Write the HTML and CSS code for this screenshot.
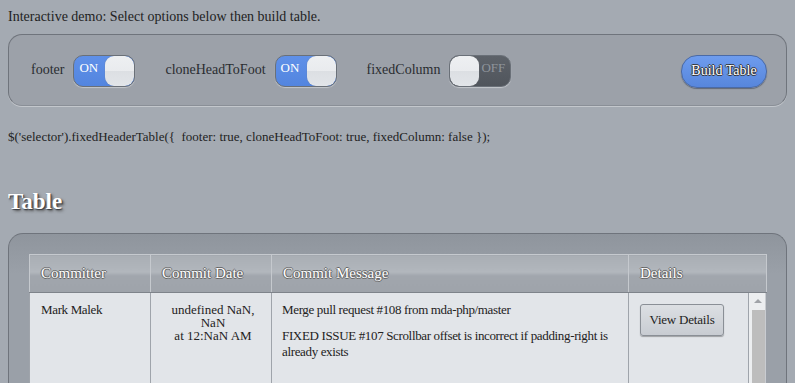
FILE: index.html
```html
<!DOCTYPE html>
<html lang="en">

<head>
  <meta charset="UTF-8">
  <meta name="viewport" content="width=device-width, initial-scale=1.0">
  <title>Fixed Header Table Demo</title>
  <link rel="stylesheet" href="styles.css">
</head>

<body>
  <p class="intro">Interactive demo: Select options below then build table.</p>

  <!-- option switches -->
  <div class="options">
    <div class="option">
      <span class="option-label">footer</span>
      <div class="toggle on"><span class="toggle-text">ON</span><span class="knob"></span></div>
    </div>
    <div class="option">
      <span class="option-label">cloneHeadToFoot</span>
      <div class="toggle on"><span class="toggle-text">ON</span><span class="knob"></span></div>
    </div>
    <div class="option">
      <span class="option-label">fixedColumn</span>
      <div class="toggle off"><span class="knob"></span><span class="toggle-text">OFF</span></div>
    </div>
    <button class="build-btn">Build Table</button>
  </div>

  <p class="code">$('selector').fixedHeaderTable({&nbsp; footer: true, cloneHeadToFoot: true, fixedColumn: false });</p>

  <h2 class="section-title">Table</h2>

  <div class="table-panel">
    <table class="head-table">
      <colgroup>
        <col class="col-committer">
        <col class="col-date">
        <col class="col-message">
        <col class="col-details">
      </colgroup>
      <thead>
        <tr>
          <th>Committer</th>
          <th>Commit Date</th>
          <th>Commit Message</th>
          <th>Details</th>
        </tr>
      </thead>
    </table>

    <div class="table-body">
      <table class="body-table">
        <colgroup>
          <col class="col-committer">
          <col class="col-date">
          <col class="col-message">
          <col class="col-details-body">
        </colgroup>
        <tbody>
          <tr>
            <td>Mark Malek</td>
            <td class="date">undefined NaN,<br>NaN<br>at 12:NaN AM</td>
            <td>
              <p>Merge pull request #108 from mda-php/master</p>
              <p>FIXED ISSUE #107 Scrollbar offset is incorrect if padding-right is already exists</p>
            </td>
            <td><button class="details-btn">View Details</button></td>
          </tr>
          <tr class="next-row">
            <td></td>
            <td></td>
            <td></td>
            <td></td>
          </tr>
        </tbody>
      </table>
      <div class="scrollbar">
        <span class="scroll-arrow"></span>
        <span class="scroll-thumb"></span>
      </div>
    </div>
  </div>
</body>

</html>
```

FILE: styles.css
```css
body {
  margin: 8px;
  background-color: #a4aab2;
  font-family: "Liberation Serif", "Times New Roman", serif;
  font-size: 14px;
  color: #222;
}

.intro {
  margin: 0;
  line-height: 17px;
}

/* options panel */
.options {
  display: flex;
  align-items: center;
  height: 70px;
  margin-top: 9px;
  padding: 0 19px 0 22px;
  background-color: #9ca1a9;
  border: 1px solid #6f747c;
  border-bottom-color: #8a8f97;
  border-radius: 14px;
  box-shadow: 0 1px 0 #c3c7cc;
}

.option {
  display: flex;
  align-items: center;
  gap: 9px;
  margin-right: 30px;
}

.option-label {
  font-size: 14px;
  color: #2a2d31;
}

.toggle {
  display: flex;
  align-items: center;
  width: 60px;
  height: 30px;
  margin-top: 2px;
  border: 1px solid #6a7078;
  border-radius: 10px;
  overflow: hidden;
  box-shadow: 0 1px 1px rgba(255, 255, 255, 0.4);
}

.toggle.on {
  background: linear-gradient(#5f90e8, #5385df);
}

.toggle.off {
  background: linear-gradient(#5d6269, #50555c);
}

.toggle-text {
  flex: 1;
  align-self: flex-start;
  padding-top: 4px;
  font-size: 13px;
  line-height: 16px;
}

.toggle.on .toggle-text {
  padding-left: 5px;
  color: #fff;
}

.toggle.off .toggle-text {
  padding-left: 2px;
  color: #8f949b;
}

.knob {
  width: 29px;
  height: 30px;
  border-radius: 9px;
  background: linear-gradient(#eef0f2 0%, #e9ebee 50%, #dcdfe3 51%, #e2e5e9 100%);
  box-shadow: 0 0 1px #777;
}

.build-btn {
  margin-left: auto;
  margin-top: 2px;
  width: 86px;
  height: 33px;
  border: 1px solid #4a6aa6;
  border-radius: 16px;
  background: linear-gradient(#6e9cee, #5786dc);
  box-shadow: 0 1px 1px rgba(40, 50, 70, 0.5);
  font-family: "Liberation Serif", "Times New Roman", serif;
  font-size: 14px;
  color: #fff;
  text-shadow: 1px 0 0 #333, -1px 0 0 #333, 0 1px 0 #333, 0 -1px 0 #333;
  cursor: pointer;
}

.code {
  margin: 23px 0 0;
  font-size: 13px;
  line-height: 16px;
  color: #222;
}

.section-title {
  margin: 44px 0 0;
  font-size: 23px;
  line-height: 26px;
  color: #fff;
  text-shadow: 1px 1px 1px #3a3e44, 2px 2px 3px #555;
}

/* table panel */
.table-panel {
  margin-top: 18px;
  padding: 20px 21px 0 20px;
  height: 150px;
  background: linear-gradient(#8f959d, #9aa0a8 40px, #9aa0a8);
  border: 1px solid #6f747c;
  border-bottom: none;
  border-radius: 15px 15px 0 0;
}

table {
  width: 737px;
  border-collapse: collapse;
  table-layout: fixed;
}

.col-committer,
.col-date {
  width: 121px;
}

.col-message {
  width: 357px;
}

.col-details {
  width: 138px;
}

.col-details-body {
  width: 120px;
}

.head-table th {
  height: 37px;
  padding: 0 11px;
  text-align: left;
  font-weight: normal;
  font-size: 15px;
  color: #fff;
  text-shadow: 1px 0 0 #666, -1px 0 0 #666, 0 1px 0 #666, 0 -1px 0 #666;
  background: linear-gradient(#a9aeb4, #b2b7bd 45%, #a1a6ad 55%, #9ea3aa);
  border: 1px solid #c5c9ce;
  border-bottom-color: #7e838a;
}

.table-body {
  display: flex;
  width: 737px;
  height: 100px;
  overflow: hidden;
  background-color: #e2e5e9;
}

.body-table {
  width: 719px;
  flex-shrink: 0;
}

.body-table td {
  height: 71px;
  padding: 9px 6px 10px 10px;
  vertical-align: top;
  font-size: 13px;
  letter-spacing: -0.35px;
  line-height: 16px;
  color: #222;
  border-right: 1px solid #9fa4ab;
  border-bottom: 1px solid #9fa4ab;
}

.body-table td:first-child {
  padding-left: 11px;
  border-left: 1px solid #9fa4ab;
}

.body-table td.date {
  padding-top: 10px;
  text-align: center;
  letter-spacing: 0;
  line-height: 13px;
}

.body-table p {
  margin: 0 0 10px;
}

.details-btn {
  width: 84px;
  height: 32px;
  margin: 2px 0 0 1px;
  padding: 0;
  white-space: nowrap;
  border: 1px solid #8a8f96;
  border-radius: 3px;
  background: linear-gradient(#dcdfe3, #c8ccd2);
  box-shadow: 0 1px 1px rgba(0, 0, 0, 0.3);
  font-family: "Liberation Serif", "Times New Roman", serif;
  font-size: 13px;
  letter-spacing: -0.2px;
  color: #222;
  cursor: pointer;
}

.scrollbar {
  position: relative;
  width: 18px;
  background-color: #eceef0;
  border-right: 1px solid #c9ccd1;
}

.scroll-arrow {
  position: absolute;
  top: 6px;
  left: 5px;
  border-left: 4px solid transparent;
  border-right: 4px solid transparent;
  border-bottom: 4px solid #a0a3a8;
}

.scroll-thumb {
  position: absolute;
  top: 17px;
  left: 3px;
  width: 13px;
  height: 120px;
  background-color: #bdbdbd;
}
```
